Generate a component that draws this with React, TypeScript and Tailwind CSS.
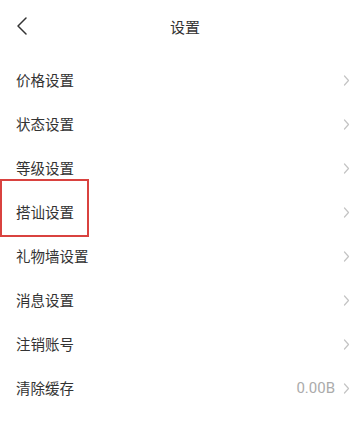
const items = [
  { label: "价格设置" },
  { label: "状态设置" },
  { label: "等级设置" },
  { label: "搭讪设置", marked: true },
  { label: "礼物墙设置" },
  { label: "消息设置" },
  { label: "注销账号" },
  { label: "清除缓存", value: "0.00B" },
]

function Chevron() {
  return (
    <svg width="7" height="11" viewBox="0 0 7 11" fill="none">
      <path d="M1.5 1l4 4.5-4 4.5" stroke="#c4c4c4" strokeWidth="1.2" strokeLinecap="round" strokeLinejoin="round" />
    </svg>
  )
}

export default function App() {
  return (
    <div className="w-[364px] h-[448px] bg-white text-[#333] font-['Noto_Sans_CJK_SC','Noto_Sans',sans-serif] overflow-hidden">
      <div className="relative h-[58px] flex items-center justify-center pb-[6px]">
        <button className="absolute left-[14px] top-[15px] p-0">
          <svg width="16" height="22" viewBox="0 0 16 22" fill="none">
            <path d="M12 3L4 11l8 8" stroke="#333" strokeWidth="1.5" strokeLinecap="round" strokeLinejoin="round" />
          </svg>
        </button>
        <h1 className="text-[15px] leading-none ml-[6px]">设置</h1>
      </div>
      <ul>
        {items.map(item => (
          <li key={item.label} className="relative h-[44px] flex items-center pl-[16px] pr-[14px]">
            <span className="text-[14.5px] leading-none flex-1">{item.label}</span>
            {item.value && <span className="text-[15px] text-[#ababab] mr-[8px] font-['Roboto',sans-serif]">{item.value}</span>}
            <Chevron />
            {item.marked && (
              <div className="absolute left-0 top-[-11px] w-[89px] h-[58px] border-2 border-[#d9423f]" />
            )}
          </li>
        ))}
      </ul>
    </div>
  )
}
